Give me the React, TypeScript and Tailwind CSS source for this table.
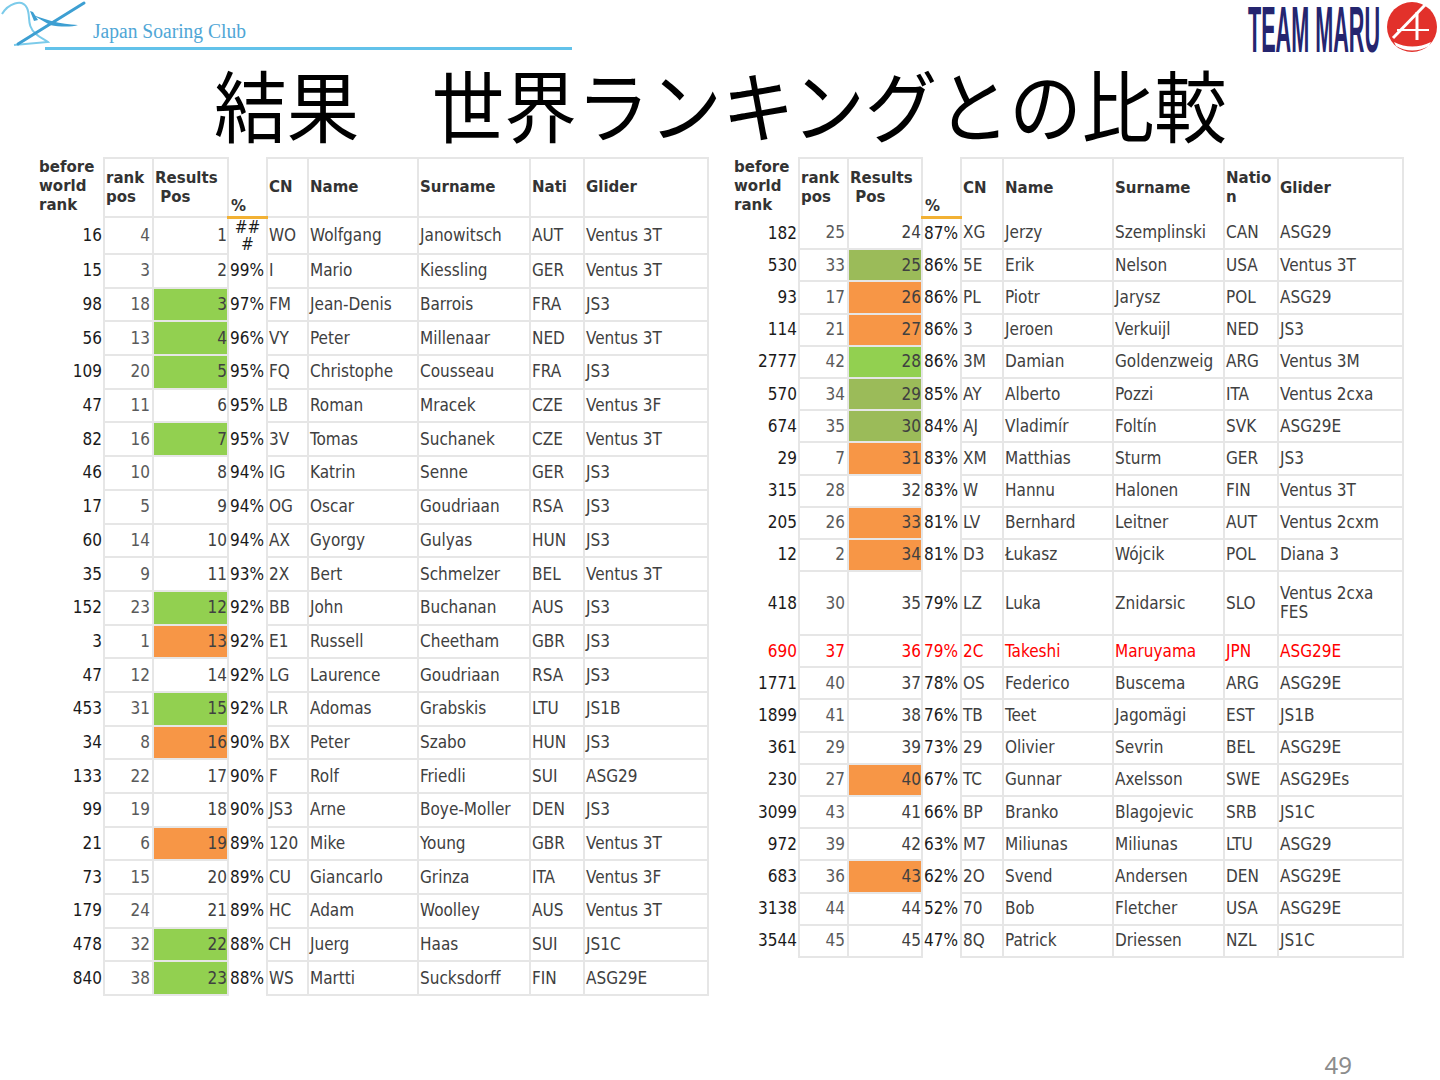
import React from "react"

type Row = [string, string, string, string, string, string, string, string, string, string]

const leftRows: Row[] = [
    ["16", "4", "1", "###", "WO", "Wolfgang", "Janowitsch", "AUT", "Ventus 3T", ""],
    ["15", "3", "2", "99%", "I", "Mario", "Kiessling", "GER", "Ventus 3T", ""],
    ["98", "18", "3", "97%", "FM", "Jean-Denis", "Barrois", "FRA", "JS3", "g"],
    ["56", "13", "4", "96%", "VY", "Peter", "Millenaar", "NED", "Ventus 3T", "g"],
    ["109", "20", "5", "95%", "FQ", "Christophe", "Cousseau", "FRA", "JS3", "g"],
    ["47", "11", "6", "95%", "LB", "Roman", "Mracek", "CZE", "Ventus 3F", ""],
    ["82", "16", "7", "95%", "3V", "Tomas", "Suchanek", "CZE", "Ventus 3T", "g"],
    ["46", "10", "8", "94%", "IG", "Katrin", "Senne", "GER", "JS3", ""],
    ["17", "5", "9", "94%", "OG", "Oscar", "Goudriaan", "RSA", "JS3", ""],
    ["60", "14", "10", "94%", "AX", "Gyorgy", "Gulyas", "HUN", "JS3", ""],
    ["35", "9", "11", "93%", "2X", "Bert", "Schmelzer", "BEL", "Ventus 3T", ""],
    ["152", "23", "12", "92%", "BB", "John", "Buchanan", "AUS", "JS3", "g"],
    ["3", "1", "13", "92%", "E1", "Russell", "Cheetham", "GBR", "JS3", "o"],
    ["47", "12", "14", "92%", "LG", "Laurence", "Goudriaan", "RSA", "JS3", ""],
    ["453", "31", "15", "92%", "LR", "Adomas", "Grabskis", "LTU", "JS1B", "g"],
    ["34", "8", "16", "90%", "BX", "Peter", "Szabo", "HUN", "JS3", "o"],
    ["133", "22", "17", "90%", "F", "Rolf", "Friedli", "SUI", "ASG29", ""],
    ["99", "19", "18", "90%", "JS3", "Arne", "Boye-Moller", "DEN", "JS3", ""],
    ["21", "6", "19", "89%", "120", "Mike", "Young", "GBR", "Ventus 3T", "o"],
    ["73", "15", "20", "89%", "CU", "Giancarlo", "Grinza", "ITA", "Ventus 3F", ""],
    ["179", "24", "21", "89%", "HC", "Adam", "Woolley", "AUS", "Ventus 3T", ""],
    ["478", "32", "22", "88%", "CH", "Juerg", "Haas", "SUI", "JS1C", "g"],
    ["840", "38", "23", "88%", "WS", "Martti", "Sucksdorff", "FIN", "ASG29E", "g"],
]

const rightRows: Row[] = [
    ["182", "25", "24", "87%", "XG", "Jerzy", "Szemplinski", "CAN", "ASG29", ""],
    ["530", "33", "25", "86%", "5E", "Erik", "Nelson", "USA", "Ventus 3T", "v"],
    ["93", "17", "26", "86%", "PL", "Piotr", "Jarysz", "POL", "ASG29", "o"],
    ["114", "21", "27", "86%", "3", "Jeroen", "Verkuijl", "NED", "JS3", "o"],
    ["2777", "42", "28", "86%", "3M", "Damian", "Goldenzweig", "ARG", "Ventus 3M", "g"],
    ["570", "34", "29", "85%", "AY", "Alberto", "Pozzi", "ITA", "Ventus 2cxa", "v"],
    ["674", "35", "30", "84%", "AJ", "Vladimír", "Foltín", "SVK", "ASG29E", "v"],
    ["29", "7", "31", "83%", "XM", "Matthias", "Sturm", "GER", "JS3", "o"],
    ["315", "28", "32", "83%", "W", "Hannu", "Halonen", "FIN", "Ventus 3T", ""],
    ["205", "26", "33", "81%", "LV", "Bernhard", "Leitner", "AUT", "Ventus 2cxm", "o"],
    ["12", "2", "34", "81%", "D3", "Łukasz", "Wójcik", "POL", "Diana 3", "o"],
    ["418", "30", "35", "79%", "LZ", "Luka", "Znidarsic", "SLO", "Ventus 2cxa|FES", "tall"],
    ["690", "37", "36", "79%", "2C", "Takeshi", "Maruyama", "JPN", "ASG29E", "red"],
    ["1771", "40", "37", "78%", "OS", "Federico", "Buscema", "ARG", "ASG29E", ""],
    ["1899", "41", "38", "76%", "TB", "Teet", "Jagomägi", "EST", "JS1B", ""],
    ["361", "29", "39", "73%", "29", "Olivier", "Sevrin", "BEL", "ASG29E", ""],
    ["230", "27", "40", "67%", "TC", "Gunnar", "Axelsson", "SWE", "ASG29Es", "o"],
    ["3099", "43", "41", "66%", "BP", "Branko", "Blagojevic", "SRB", "JS1C", ""],
    ["972", "39", "42", "63%", "M7", "Miliunas", "Miliunas", "LTU", "ASG29", ""],
    ["683", "36", "43", "62%", "2O", "Svend", "Andersen", "DEN", "ASG29E", "o"],
    ["3138", "44", "44", "52%", "70", "Bob", "Fletcher", "USA", "ASG29E", ""],
    ["3544", "45", "45", "47%", "8Q", "Patrick", "Driessen", "NZL", "JS1C", ""],
]

const fills: Record<string, string> = {
    g: "bg-[#92d050]",
    o: "bg-[#f79646]",
    v: "bg-[#9bbb59]",
}

const B = "border-2 border-[#e6e6e6]"

function ResultTable({ rows, widths, rowH, nationHead, headLine }: {
    rows: Row[]
    widths: number[]
    rowH: string
    nationHead: React.ReactNode
    headLine: boolean
}) {
    const hb = headLine ? "" : "border-b-0"
    return (
        <table className="table-fixed border-collapse w-[671px] text-[17px] leading-[19px] font-['DejaVu_Sans_Condensed','Noto_Sans',sans-serif] font-stretch-condensed">
            <colgroup>
                {widths.map((w, i) => <col key={i} style={{ width: w }} />)}
            </colgroup>
            <thead>
                <tr className="h-[59px] text-[15px] leading-[19px] font-bold text-[#333] font-['DejaVu_Sans',sans-serif] font-stretch-normal">
                    <th className="align-top text-left font-bold pl-[2px] pt-0">before<br />world<br />rank</th>
                    <th className={`${B} ${hb} text-left pl-[1px]`}>rank<br />pos</th>
                    <th className={`${B} ${hb} text-left pl-[1px]`}>Results<br />&nbsp;Pos</th>
                    <th className="align-bottom text-left pl-[2px] border-b-[3px] border-b-[#f2b134]">%</th>
                    <th className={`${B} ${hb} text-left pl-[1px]`}>CN</th>
                    <th className={`${B} ${hb} text-left pl-[1px]`}>Name</th>
                    <th className={`${B} ${hb} text-left pl-[1px]`}>Surname</th>
                    <th className={`${B} ${hb} text-left pl-[1px]`}>{nationHead}</th>
                    <th className={`${B} ${hb} text-left pl-[1px]`}>Glider</th>
                </tr>
            </thead>
            <tbody>
                {rows.map((r, i) => {
                    const red = r[9] === "red"
                    const tall = r[9] === "tall"
                    const fill = fills[r[9]] ?? ""
                    const tb = !headLine && i === 0 ? "border-t-0" : ""
                    const c1 = red ? "text-[#ff0000]" : "text-[#1a1a1a]"
                    const c2 = red ? "text-[#ff0000]" : "text-[#5a5a5a]"
                    const c3 = red ? "text-[#ff0000]" : "text-[#404040]"
                    const h = tall ? "h-[64px]" : i === 0 && headLine ? "h-[37px]" : rowH
                    const glider = r[8].split("|")
                    return (
                        <tr key={i} className={`${h} whitespace-nowrap`}>
                            <td className={`text-right pr-[1px] ${c1}`}>{r[0]}</td>
                            <td className={`${B} ${tb} text-right pr-[2px] ${c2}`}>{r[1]}</td>
                            <td className={`${B} ${tb} text-right pr-0 ${fill} ${c3}`}>{r[2]}</td>
                            {r[3] === "###" ? (
                                <td className={`text-center leading-[17px] ${c1}`}>##<br />#</td>
                            ) : (
                                <td className={`text-left pl-[1px] ${c1}`}>{r[3]}</td>
                            )}
                            <td className={`${B} ${tb} pl-[1px] ${c3}`}>{r[4]}</td>
                            <td className={`${B} ${tb} pl-[1px] ${c3}`}>{r[5]}</td>
                            <td className={`${B} ${tb} pl-[1px] ${c3}`}>{r[6]}</td>
                            <td className={`${B} ${tb} pl-[1px] ${c3}`}>{r[7]}</td>
                            <td className={`${B} ${tb} pl-[1px] ${c3}`}>
                                {glider.map((g, k) => <div key={k}>{g}</div>)}
                            </td>
                        </tr>
                    )
                })}
            </tbody>
        </table>
    )
}

function SoaringLogo() {
    return (
        <svg width="580" height="56" viewBox="0 0 580 56">
            {/* swoosh */}
            <path d="M2 14 C 8 4, 22 -2, 27 8 C 31 16, 26 26, 36 34 C 40 38, 46 40, 48 42 L 14 45"
                fill="none" stroke="#7ccbea" strokeWidth="2" />
            {/* glider */}
            <path d="M18 44 L 84 3" stroke="#3d9fd2" strokeWidth="3" strokeLinecap="round" />
            <path d="M31 14 C 45 20, 60 24, 78 25 C 72 27, 60 27, 50 25 Z" fill="#3d9fd2" />
            <path d="M30 11 L 34 21 L 38 20 L 33 12 Z" fill="#3d9fd2" />
            <text x="93" y="38" fontFamily="'Liberation Serif', serif" fontSize="20" fill="#4fa6d6"
                textLength="153" lengthAdjust="spacingAndGlyphs">Japan Soaring Club</text>
            <rect x="45" y="47" width="527" height="3" fill="#62c2ea" />
        </svg>
    )
}

function MaruLogo() {
    return (
        <svg width="195" height="56" viewBox="0 0 195 56">
            <text x="3" y="52" fontFamily="'Liberation Sans', sans-serif" fontWeight="bold" fontSize="64"
                fill="#25256f" textLength="132" lengthAdjust="spacingAndGlyphs">TEAM MARU</text>
            <circle cx="167" cy="27" r="25" fill="#e2312b" />
            <path d="M180 5 L 148 38" stroke="#fff" strokeWidth="3" />
            <path d="M172 12 L 172 40" stroke="#fff" strokeWidth="3" />
            <path d="M152 30 L 184 30" stroke="#fff" strokeWidth="2" />
            <path d="M149 42 Q 167 51 186 42 L 184 46 Q 167 55 151 46 Z" fill="#fff" />
        </svg>
    )
}

export default function App() {
    return (
        <div className="w-[1440px] h-[1080px] bg-white flex flex-col overflow-hidden">
            <div className="h-[56px] flex justify-between">
                <SoaringLogo />
                <MaruLogo />
            </div>

            <div className="h-[101px] flex items-center justify-center pb-[8px]">
                <h1 className="text-[78px] leading-none font-normal text-black scale-x-[0.93] whitespace-nowrap font-['Noto_Sans_CJK_JP',sans-serif]">
                    結果　世界ランキングとの比較
                </h1>
            </div>

            <div className="flex items-start gap-[23px] pl-[37px]">
                <ResultTable
                    rows={leftRows}
                    widths={[67, 49, 75, 39, 41, 110, 112, 54, 124]}
                    rowH="h-[33.7px]"
                    nationHead="Nati"
                    headLine={true}
                />
                <ResultTable
                    rows={rightRows}
                    widths={[67, 49, 74, 39, 42, 110, 111, 54, 125]}
                    rowH="h-[32.2px]"
                    nationHead={<>Natio<br />n</>}
                    headLine={false}
                />
            </div>

            <div className="mt-auto flex justify-end pr-[88px] pb-0">
                <span className="text-[24px] leading-[30px] text-[#8c8c8c] font-['Noto_Sans',sans-serif]">49</span>
            </div>
        </div>
    )
}
